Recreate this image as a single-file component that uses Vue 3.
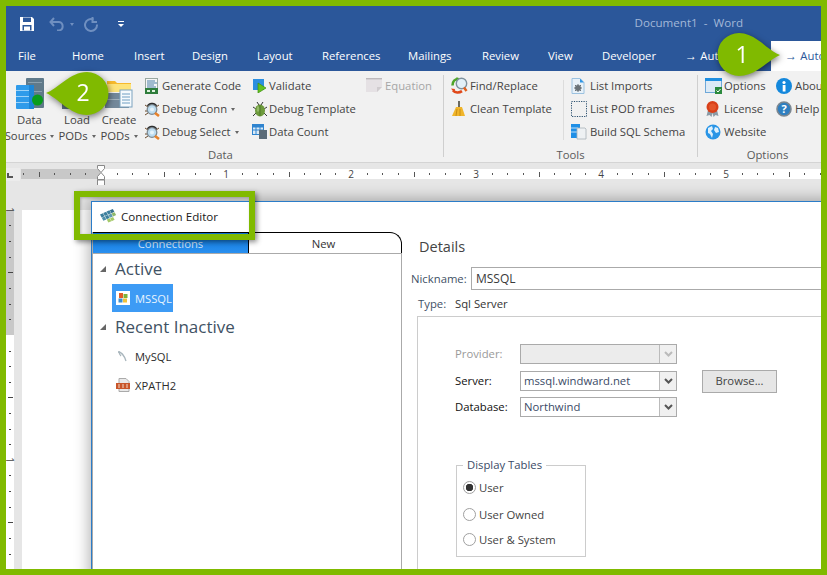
<script setup>
const tabs = [
  { label: 'File', width: 54 },
  { label: 'Home', width: 62 },
  { label: 'Insert', width: 58 },
  { label: 'Design', width: 65 },
  { label: 'Layout', width: 65 },
  { label: 'References', width: 86 },
  { label: 'Mailings', width: 74 },
  { label: 'Review', width: 66 },
  { label: 'View', width: 54 },
  { label: 'Developer', width: 83 },
  { label: 'Auto', width: 86, arrow: true }
]
const rulerTicks = []
for (let i = -5; i <= 46; i++) {
  const left = 80 + i * 15.625
  const kind = i === 0 ? 'none' : i % 8 === 0 ? 'num' : i % 4 === 0 ? 'long' : 'dot'
  rulerTicks.push({ i, left, kind, label: i / 8 })
}
const vTicks = [225, 241, 257, 272, 288, 304, 319, 351, 366, 382, 397, 413, 429, 444, 475, 491, 507, 522, 538, 554].map(y => ({
  top: y - 210,
  long: y === 272 || y === 522 || y === 397
}))
const vNums = [0, 250]
</script>

<template>
  <div class="frame">
    <header class="titlebar">
      <div class="qat">
        <svg class="qi-save" width="16" height="16" viewBox="0 0 16 16"><path d="M1 1h12l2 2v12H1z" fill="#fff"/><rect x="4" y="1.5" width="8" height="4.5" fill="#2b579a"/><rect x="3.5" y="9" width="9" height="5.5" fill="#2b579a"/><rect x="5" y="10.5" width="6" height="4" fill="#fff"/></svg>
        <svg class="qi-undo" width="17" height="14" viewBox="0 0 17 14" fill="none" stroke="#6f8fc0" stroke-width="2"><path d="M5 1 1.5 5 5 9"/><path d="M2 5h8a4.3 4.3 0 0 1 0 8.5H8"/></svg>
        <span class="qi-caret dim"></span>
        <svg class="qi-redo" width="15" height="15" viewBox="0 0 15 15" fill="none" stroke="#6f8fc0" stroke-width="2"><path d="M9.5 2.5A6 6 0 1 0 13 7.5"/><path d="M8.5 0v5h4.5"/></svg>
        <span class="qi-more"></span>
      </div>
      <div class="doc-title">Document1&nbsp; - &nbsp;Word</div>
    </header>

    <nav class="tabs">
      <div v-for="t in tabs" :key="t.label" class="tab" :style="{ width: t.width + 'px' }"><span v-if="t.arrow" class="arrow">→ </span>{{ t.label }}</div>
      <div class="tab-active"><span class="arrow">→ </span>Auto</div>
    </nav>

    <section class="ribbon">
      <div class="group group-data">
        <div class="group-body">
          <div class="big big-1">
            <svg width="30" height="33" viewBox="0 0 30 33"><rect x="11" y="0" width="18" height="30" rx="1" fill="#607a8a"/><rect x="13" y="4" width="14" height="1" fill="#8aa0ae"/><rect x="13" y="13" width="14" height="1" fill="#8aa0ae"/><rect x="1" y="7" width="18" height="24" rx="1" fill="#2f9bea"/><rect x="1" y="12" width="13" height="1" fill="#9ed3f8"/><rect x="1" y="18" width="13" height="1" fill="#9ed3f8"/><rect x="1" y="24" width="13" height="1" fill="#9ed3f8"/><rect x="14" y="7" width="5" height="24" fill="#1d86d6"/><circle cx="22.5" cy="22" r="5.5" fill="#0a9c1c"/></svg>
            <span>Data</span>
            <span>Sources<i class="caret"></i></span>
          </div>
          <div class="big big-2">
            <svg width="34" height="33" viewBox="0 0 34 33"><rect x="2" y="22" width="30" height="9" fill="#5d7280"/><rect x="14" y="2" width="20" height="26" fill="#f4cf50"/></svg>
            <span>Load</span>
            <span>PODs<i class="caret"></i></span>
          </div>
          <div class="big big-3">
            <svg width="28" height="33" viewBox="0 0 28 33"><path d="M2 3h8l2 2h14v8H2z" fill="#f6b92d"/><rect x="2" y="6" width="24" height="8" fill="#fde37a"/><rect x="0" y="15" width="24" height="15" fill="#73889a"/><rect x="0" y="21" width="24" height="1" fill="#a3b2bd"/><rect x="15" y="12" width="12" height="17" fill="#f5fafd" stroke="#7da3bf"/><path d="M17 16h8M17 19h8M17 22h8M17 25h8" stroke="#6f9ec2"/></svg>
            <span>Create</span>
            <span>PODs<i class="caret"></i></span>
          </div>
          <div class="col col-a">
            <div class="cmd">
              <svg width="14" height="16" viewBox="0 0 14 16"><rect x=".5" y=".5" width="12" height="15" fill="#f6f6f6" stroke="#9aa8a0"/><path d="M2 3h8M2 5h10M2 7h7M2 9h9" stroke="#4a7fa6"/><rect y="10" width="13" height="6" fill="#2f7d3c"/><rect x="2" y="12" width="3" height="2" fill="#dff2df"/><rect x="7" y="12" width="3" height="2" fill="#dff2df"/></svg>
              <span>Generate Code</span>
            </div>
            <div class="cmd">
              <svg width="15" height="16" viewBox="0 0 15 16"><path d="M2 5.500C2 .5 12 .5 12 5.500z" fill="#2e2e2e"/><path d="M0 4l3 2M14 4l-3 2M0 10h2M0 14l3-2" stroke="#6b4a2a"/><circle cx="7" cy="8.500" r="4.800" fill="#bcdcf0" stroke="#7d8a92" stroke-width="1.300"/><circle cx="7" cy="8.500" r="2" fill="#e6f3fa"/><path d="M10 12l4 3" stroke="#e8822a" stroke-width="2.600"/></svg>
              <span>Debug Conn<i class="caret"></i></span>
            </div>
            <div class="cmd">
              <svg width="15" height="16" viewBox="0 0 15 16"><path d="M2 5.500C2 .5 12 .5 12 5.500z" fill="#2e2e2e"/><path d="M0 4l3 2M14 4l-3 2M0 10h2M0 14l3-2" stroke="#6b4a2a"/><circle cx="7" cy="8.500" r="4.800" fill="#bcdcf0" stroke="#7d8a92" stroke-width="1.300"/><circle cx="7" cy="8.500" r="2" fill="#e6f3fa"/><path d="M10 12l4 3" stroke="#e8822a" stroke-width="2.600"/></svg>
              <span>Debug Select<i class="caret"></i></span>
            </div>
          </div>
          <div class="col col-b">
            <div class="cmd">
              <svg width="15" height="15" viewBox="0 0 15 15"><rect x="1" y="1" width="11" height="11" fill="#2c8fe0"/><path d="M6 5l8 5-8 5z" fill="#63c21f" stroke="#3d8f10" stroke-width=".7"/></svg>
              <span>Validate</span>
            </div>
            <div class="cmd">
              <svg width="16" height="16" viewBox="0 0 16 16"><path d="M5 1l2 3M11 1 9 4M1 6l3 2M15 6l-3 2M1 15l3-3M15 15l-3-3" stroke="#333" fill="none"/><ellipse cx="8" cy="9.5" rx="5" ry="6" fill="#6d9a3c"/><path d="M8 4v11" stroke="#3f6a20" stroke-width=".7"/><ellipse cx="6" cy="8" rx="1.3" ry="3" fill="#93ba66"/></svg>
              <span>Debug Template</span>
            </div>
            <div class="cmd">
              <svg width="15" height="15" viewBox="0 0 15 15"><rect x=".5" y=".5" width="11" height="10" fill="#dbeaf6" stroke="#2f84cf"/><rect x="1" y="1" width="10" height="2.5" fill="#2f84cf"/><path d="M4 3v8M8 3v8M1 6h10" stroke="#2f84cf"/><rect x="7" y="6" width="8" height="9" fill="#5b6c78"/></svg>
              <span>Data Count</span>
            </div>
          </div>
          <div class="col col-c">
            <div class="cmd disabled">
              <svg width="17" height="15" viewBox="0 0 17 15"><path d="M0 1h16v8l-5 5H0z" fill="#e5e1e4"/><rect y="0" width="16" height="1.4" fill="#bdb9bc"/><path d="M11 14l5-5h-5z" fill="#cfcbce"/></svg>
              <span>Equation</span>
            </div>
          </div>
        </div>
        <div class="group-label label-data">Data</div>
      </div>
      <div class="sep"></div>

      <div class="group group-tools">
        <div class="group-body">
          <div class="col col-d">
            <div class="cmd">
              <svg width="17" height="17" viewBox="0 0 17 17"><path d="M1.500 8.500C1.500 4.500 4 2 7.500 2" fill="none" stroke="#4fa52a" stroke-width="2.600"/><path d="M5.500 0l3.500 2-3.500 2.800z" fill="#4fa52a"/><path d="M2 13.500c2 2.500 6 2.700 9 .7" fill="none" stroke="#e0481a" stroke-width="2.600"/><path d="M0 11.500l4 .5-.8 3.500z" fill="#e0481a"/><circle cx="10.500" cy="6.500" r="5.200" fill="#e2f0f8" stroke="#7f929e" stroke-width="1.400"/><path d="M13 10.500l2.500 3.500" stroke="#e0601e" stroke-width="2.400"/></svg>
              <span>Find/Replace</span>
            </div>
            <div class="cmd">
              <svg width="15" height="16" viewBox="0 0 15 16"><rect x="7" y="0" width="2" height="7" fill="#6a6a60"/><path d="M5 6h6l3 9H1z" fill="#f0b52a"/><path d="M5 15l1-7M9 15V8" stroke="#c98d14" fill="none"/></svg>
              <span>Clean Template</span>
            </div>
          </div>
          <div class="light-sep"></div>
          <div class="col col-e">
            <div class="cmd">
              <svg width="14" height="16" viewBox="0 0 14 16"><path d="M1 .5h8l4 4v11H1z" fill="#e8f1f8" stroke="#9cc2e0"/><path d="M9 .5v4h4z" fill="#2f95e4"/><circle cx="7" cy="10" r="3" fill="#6b7378"/><circle cx="7" cy="10" r="1" fill="#e8f1f8"/><path d="M7 6v8M3 10h8M4 7l6 6M10 7l-6 6" stroke="#6b7378"/></svg>
              <span>List Imports</span>
            </div>
            <div class="cmd">
              <svg width="16" height="16" viewBox="0 0 16 16"><rect x=".5" y=".5" width="15" height="15" fill="none" stroke="#2a4f6e" stroke-dasharray="1.2 1.2"/></svg>
              <span>List POD frames</span>
            </div>
            <div class="cmd">
              <svg width="16" height="16" viewBox="0 0 16 16"><rect x="0" y="0" width="9" height="14" fill="#1f8fe6"/><path d="M0 4h7M0 8h7" stroke="#bfe0fa"/><path d="M6 4h8l1 1v10H6z" fill="#eef1f3" stroke="#a8b2b8" stroke-width=".8"/></svg>
              <span>Build SQL Schema</span>
            </div>
          </div>
        </div>
        <div class="group-label">Tools</div>
      </div>
      <div class="sep"></div>

      <div class="group group-options">
        <div class="group-body">
          <div class="col col-f">
            <div class="cmd">
              <svg width="17" height="16" viewBox="0 0 17 16"><rect x=".5" y=".5" width="16" height="14" fill="#dceaf6" stroke="#6fa8d8"/><rect x="0" y="0" width="17" height="3" fill="#1f8fe0"/><rect x="10" y="9" width="7" height="7" fill="#2c8a3e"/><path d="M11.5 12.5l1.5 1.5 2.5-3" stroke="#fff" fill="none"/></svg>
              <span>Options</span>
            </div>
            <div class="cmd">
              <svg width="15" height="16" viewBox="0 0 15 16"><path d="M3 9 1.5 15l3-1 2 2 1-4 1 4 2-2 3 1L12 9z" fill="#8a9aa5"/><circle cx="7.5" cy="6" r="6" fill="#d8401a"/><circle cx="7.5" cy="6" r="3.5" fill="#e4552a"/></svg>
              <span>License</span>
            </div>
            <div class="cmd">
              <svg width="16" height="16" viewBox="0 0 16 16"><circle cx="8" cy="8" r="7.5" fill="#2a95e6"/><path d="M3 4l4-2 1 3-2 2 2 3-1 4-2-4-2-1zM10 3l3 1 1 4-3 1-2-3z" fill="#dff0fb"/></svg>
              <span>Website</span>
            </div>
          </div>
          <div class="col col-g">
            <div class="cmd">
              <svg width="16" height="16" viewBox="0 0 16 16"><circle cx="8" cy="8" r="8" fill="#1488dc"/><rect x="6.7" y="7" width="2.8" height="6.5" fill="#fff"/><circle cx="8" cy="4.5" r="1.6" fill="#fff"/></svg>
              <span>About</span>
            </div>
            <div class="cmd">
              <svg width="16" height="16" viewBox="0 0 16 16"><circle cx="8" cy="8" r="7" fill="#2f7fc0" stroke="#7c8790" stroke-width="1.6"/><text x="8" y="12" text-anchor="middle" class="q-glyph">?</text></svg>
              <span>Help</span>
            </div>
          </div>
        </div>
        <div class="group-label label-options">Options</div>
      </div>
    </section>

    <section class="h-ruler">
      <div class="corner"><i class="corner-l"></i></div>
      <div class="strip">
        <div class="strip-grey"></div>
        <template v-for="t in rulerTicks" :key="t.i">
          <span v-if="t.kind === 'num'" class="r-num" :style="{ left: t.left + 'px' }">{{ t.label }}</span>
          <i v-else-if="t.kind !== 'none'" :class="t.kind === 'long' ? 'r-long' : 'r-dot'" :style="{ left: t.left + 'px' }"></i>
        </template>
      </div>
      <svg class="indent" width="10" height="22" viewBox="0 0 10 22"><path d="M1.5.5h7v3L5 7.5 1.5 3.5z" fill="#fff" stroke="#888"/><path d="M5 7.5l3.500 4v3h-7v-3z" fill="#fff" stroke="#888"/><rect x="1.500" y="15" width="7" height="6" fill="#fff" stroke="#888"/></svg>
    </section>

    <section class="doc">
      <aside class="v-ruler">
        <div class="v-grey"></div>
        <i v-for="t in vTicks" :key="t.top" :class="t.long ? 'v-long' : 'v-dot'" :style="{ top: t.top + 'px' }"></i>
        <span v-for="n in vNums" :key="n" class="v-num" :style="{ top: n + 'px' }">1</span>
      </aside>
      <div class="gutter"></div>
      <div class="page"></div>

      <div class="dialog">
        <div class="dlg-title">
          <svg width="17" height="16" viewBox="0 0 17 16"><g transform="matrix(.82 -.36 .44 .82 0 6.500)"><rect x="0" y="0" width="3.600" height="3.600" fill="#3c7f9c"/><rect x="4" y="0" width="3.600" height="3.600" fill="#3c7f9c"/><rect x="8" y="0" width="3.600" height="3.600" fill="#3c7f9c"/><rect x="12" y="0" width="3.600" height="3.600" fill="#356f8d"/><rect x="0" y="4" width="3.600" height="3.600" fill="#4f8fa8"/><rect x="4" y="4" width="3.600" height="3.600" fill="#3c7f9c"/><rect x="8" y="4" width="3.600" height="3.600" fill="#5d9ab0"/><rect x="12" y="4" width="3.600" height="3.600" fill="#8fb86a"/><rect x="4" y="8" width="3.600" height="3.600" fill="#a5c96a"/><rect x="8" y="8" width="3.600" height="3.600" fill="#a5c96a"/></g></svg>
          <span>Connection Editor</span>
        </div>
        <div class="dlg-body">
          <div class="left-pane">
            <div class="ltabs">
              <div class="ltab on">Connections</div>
              <div class="ltab off">New</div>
            </div>
            <div class="tree">
              <div class="t-head"><i class="t-arrow"></i>Active</div>
              <div class="t-item selected">
                <span class="t-tile"><svg width="12" height="12" viewBox="0 0 12 12"><rect x="2" y="1" width="4" height="5" fill="#e05a28"/><rect x="6.500" y="2" width="4" height="4" fill="#7fb23a"/><rect x="1.500" y="6.500" width="4" height="4" fill="#3a8fd0"/><rect x="6" y="6.500" width="4" height="4" fill="#efc13a"/></svg></span>
                <span>MSSQL</span>
              </div>
              <div class="t-head"><i class="t-arrow"></i>Recent Inactive</div>
              <div class="t-item">
                <svg class="t-ico" width="14" height="14" viewBox="0 0 14 14" fill="none" stroke="#a9b6bd" stroke-width="1.300"><path d="M2 3c3 0 6 3 8 9"/><path d="M3 2c0 3 1 4 2 5"/></svg>
                <span>MySQL</span>
              </div>
              <div class="t-item">
                <svg class="t-ico" width="14" height="14" viewBox="0 0 14 14"><path d="M3 .5h7l3 3V13.500H3z" fill="#e9e9e9" stroke="#aaa"/><rect x="0" y="5" width="14" height="6" fill="#c8562a"/><path d="M2 7h2M6 7h2M10 7h2M2 9h2M6 9h2M10 9h2" stroke="#f3d9c9"/></svg>
                <span>XPATH2</span>
              </div>
            </div>
          </div>
          <div class="right-pane">
            <h2 class="details">Details</h2>
            <div class="nick">
              <label>Nickname:</label>
              <div class="nick-input">MSSQL</div>
            </div>
            <div class="type-row"><span class="type-l">Type:</span><span>Sql Server</span></div>
            <div class="panel">
              <div class="f-row f-provider">
                <label class="muted">Provider:</label>
                <div class="combo disabled-combo"><span></span><b><svg width="9" height="6" viewBox="0 0 9 6" fill="none" stroke="#bbb" stroke-width="2"><path d="M1 1l3.500 3.500L8 1"/></svg></b></div>
              </div>
              <div class="f-row f-server">
                <label>Server:</label>
                <div class="combo"><span>mssql.windward.net</span><b><svg width="9" height="6" viewBox="0 0 9 6" fill="none" stroke="#555" stroke-width="2"><path d="M1 1l3.500 3.500L8 1"/></svg></b></div>
                <button class="browse">Browse...</button>
              </div>
              <div class="f-row">
                <label>Database:</label>
                <div class="combo"><span>Northwind</span><b><svg width="9" height="6" viewBox="0 0 9 6" fill="none" stroke="#555" stroke-width="2"><path d="M1 1l3.500 3.500L8 1"/></svg></b></div>
              </div>
              <fieldset class="tables">
                <legend>Display Tables</legend>
                <div class="radio r1"><i class="dot checked"></i>User</div>
                <div class="radio r2"><i class="dot"></i>User Owned</div>
                <div class="radio r3"><i class="dot"></i>User &amp; System</div>
              </fieldset>
            </div>
          </div>
        </div>
      </div>
      <div class="hl-box"></div>
    </section>

    <svg class="callout c1" width="72" height="56" viewBox="0 0 72 56"><path d="M70 29C58 25 46 7 29 7A21.500 21.500 0 0 0 29 50C46 50 58 34 70 29Z" fill="#80ba00"/><text x="32" y="37" text-anchor="middle">1</text></svg>
    <svg class="callout c2" width="72" height="56" viewBox="0 0 72 56"><path d="M6 27C18 23 30 6 47 6A21.500 21.500 0 0 1 47 49C30 49 18 32 6 27Z" fill="#80ba00"/><text x="43" y="35" text-anchor="middle">2</text></svg>
  </div>
</template>

<style scoped>
.frame {
  position: relative;
  width: 827px;
  height: 575px;
  box-sizing: border-box;
  border: 6px solid #80ba00;
  overflow: hidden;
  background: #e6e6e6;
  font-family: "Open Sans", "Noto Sans", sans-serif;
  font-size: 11.3px;
  color: #444;
  display: flex;
  flex-direction: column;
}
.titlebar {
  height: 35px;
  flex: none;
  background: #2b579a;
  display: flex;
  justify-content: space-between;
}
.qat { display: flex; align-items: center; padding-left: 13px; padding-top: 1px; }
.qi-undo { margin-left: 14px; }
.qi-caret { width: 0; height: 0; border: 2.5px solid transparent; border-top: 3px solid #6f8fc0; border-bottom: 0; margin-left: 4px; }
.qi-redo { margin-left: 10px; }
.qi-more { width: 6px; height: 6px; margin-left: 19px; border-top: 1px solid #fff; position: relative; }
.qi-more::after { content: ""; position: absolute; left: 0; top: 2px; border: 3px solid transparent; border-top: 3px solid #fff; border-bottom: 0; }
.doc-title { color: #a3b8d8; font-size: 11.6px; padding: 9px 78px 0 0; line-height: 16px; }
.tabs {
  height: 30px;
  flex: none;
  background: #2b579a;
  padding-left: 12px;
  display: flex;
  overflow: hidden;
}
.tab { flex: none; color: #fff; font-size: 11.3px; line-height: 30px; white-space: nowrap; }
.arrow { font-family: "Liberation Sans", sans-serif; font-size: 12px; }
.tab-active { flex: none; width: 60px; padding-left: 14px; background: #fff; color: #2b579a; font-size: 11.3px; line-height: 30px; white-space: nowrap; }
.ribbon {
  height: 92px;
  flex: none;
  box-sizing: border-box;
  background: #f1f1f1;
  border-bottom: 1px solid #d4d4d4;
  display: flex;
}
.group { display: flex; flex-direction: column; flex: none; height: 91px; }
.group-data { width: 437px; }
.group-tools { width: 253px; }
.group-options { width: 130px; }
.group-body { display: flex; height: 74px; padding-top: 3px; flex: none; }
.group-label { text-align: center; line-height: 14px; color: #5a5a5a; }
.label-data { padding-right: 8px; }
.label-options { padding-left: 9px; }
.sep { width: 1px; flex: none; background: #cfcfcf; margin: 4px 0 5px; }
.light-sep { width: 1px; background: #dcdcdc; margin: 6px 7px 8px 0; flex: none; }
.big { display: flex; flex-direction: column; align-items: center; flex: none; line-height: 16px; white-space: nowrap; }
.big svg { margin: 4px 0 1px; flex: none; height: 33px; }
.big span { display: block; }
.big-1 { width: 47px; }
.big-2 { width: 48px; }
.big-3 { width: 36px; }
.col { display: flex; flex-direction: column; flex: none; --slot: 19px; }
.col-a { width: 107px; margin-left: 8px; --slot: 17px; }
.col-b { width: 114px; --slot: 17px; }
.col-c { width: 76px; }
.col-d { width: 112px; margin-left: 7px; }
.col-e { width: 120px; }
.col-f { width: 71px; margin-left: 7px; }
.col-g { width: 52px; }
.cmd { height: 23px; display: grid; grid-template-columns: var(--slot) auto; align-items: center; justify-content: start; white-space: nowrap; }
.cmd.disabled { color: #a6a6a6; }
.q-glyph { font: 700 11px "Open Sans", sans-serif; fill: #fff; }
.caret { display: inline-block; width: 0; height: 0; border: 2.5px solid transparent; border-top: 3px solid #666; border-bottom: 0; margin-left: 4px; vertical-align: 2px; }
.h-ruler { position: relative; height: 22px; flex: none; background: #e6e6e6; }
.corner { position: absolute; left: 0; top: 5px; width: 14px; height: 13px; background: #ececec; }
.corner-l { position: absolute; left: 1px; top: 5px; width: 4px; height: 3px; border-left: 2px solid #555; border-bottom: 2px solid #555; }
.strip { position: absolute; left: 15px; right: 0; top: 6px; height: 10px; background: #fff; }
.strip-grey { position: absolute; left: 0; top: 0; bottom: 0; width: 79px; background: #c8c8c8; }
.r-num { position: absolute; top: 0; width: 12px; margin-left: -6px; text-align: center; font-size: 10px; line-height: 10px; color: #444; }
.r-dot { position: absolute; top: 4px; width: 1px; height: 2px; background: #555; }
.r-long { position: absolute; top: 3px; width: 1px; height: 5px; background: #555; }
.indent { position: absolute; left: 90px; top: 2px; }
.doc { position: relative; flex: 1; display: flex; min-height: 0; background: #e6e6e6; }
.v-ruler { position: relative; width: 8px; flex: none; background: #fff; margin-top: 25px; }
.v-grey { position: absolute; left: 0; right: 0; top: 0; height: 125px; background: #c8c8c8; }
.v-dot { position: absolute; left: 3px; width: 2px; height: 1px; background: #444; }
.v-long { position: absolute; left: 2px; width: 5px; height: 1px; background: #444; }
.v-num { position: absolute; left: 0; width: 8px; height: 8px; margin-top: -4px; font-size: 10px; line-height: 8px; text-align: center; color: #444; transform: rotate(90deg); }
.gutter { width: 8px; flex: none; }
.page { flex: 1; background: #fff; margin-top: 25px; }
.dialog {
  position: absolute;
  left: 85px;
  top: 16px;
  width: 760px;
  height: 400px;
  box-sizing: border-box;
  background: #fff;
  border-top: 1px solid #2b7cc8;
  border-left: 1px solid #2b7cc8;
  box-shadow: 0 0 14px 2px rgba(0, 0, 0, 0.3);
  display: flex;
  flex-direction: column;
}
.dlg-title { height: 30px; flex: none; display: flex; align-items: center; gap: 4px; padding-left: 8px; padding-bottom: 2px; box-sizing: border-box; color: #1a1a1a; font-size: 11.6px; }
.dlg-body { flex: 1; display: flex; min-height: 0; border-left: 1px solid #aaa; }
.left-pane { width: 309px; flex: none; display: flex; flex-direction: column; }
.ltabs { display: flex; height: 22px; flex: none; border-bottom: 1px solid #aaa; box-sizing: border-box; }
.ltab { text-align: center; font-size: 11.3px; line-height: 21px; box-sizing: border-box; border-top: 1px solid #000; }
.ltab.on { width: 155px; background: linear-gradient(#0d76d8, #2990f0); color: #cfe3f6; }
.ltab.off { width: 154px; padding-right: 3px; border-left: 1px solid #000; border-right: 1px solid #000; border-top-right-radius: 12px; color: #333; }
.tree { flex: 1; border-right: 1px solid #aaa; padding-top: 1px; display: flex; flex-direction: column; gap: 1px; align-items: flex-start; }
.t-head { height: 28px; line-height: 28px; font-size: 17px; color: #3f5264; padding-left: 22px; position: relative; white-space: nowrap; }
.t-arrow { position: absolute; left: 7px; top: 11px; width: 0; height: 0; border-bottom: 6px solid #666; border-left: 6px solid transparent; }
.t-item { height: 28px; display: flex; align-items: center; gap: 5px; margin-left: 19px; padding-left: 4px; font-size: 11.2px; color: #2c2c2c; white-space: nowrap; }
.t-item.selected { width: 57px; background: #3d9bf5; color: #e8f3fe; }
.t-tile { width: 14px; height: 14px; background: #fff; display: flex; align-items: center; justify-content: center; flex: none; }
.t-ico { flex: none; }
.right-pane { flex: 1; min-width: 0; padding-left: 9px; }
.details { margin: 0 0 0 8px; font-weight: 400; font-size: 14.5px; line-height: 30px; color: #444; }
.nick { display: flex; align-items: center; margin-top: 5px; height: 23px; }
.nick label { width: 60px; flex: none; color: #3f5166; font-size: 11.3px; }
.nick-input { flex: 1; height: 23px; box-sizing: border-box; border: 1px solid #aaa; padding-left: 4px; line-height: 21px; font-size: 12px; color: #3a3a3a; }
.type-row { margin: 5px 0 0 7px; height: 18px; line-height: 18px; display: flex; color: #333; }
.type-l { width: 37px; color: #3f5166; }
.panel { margin: 3px 0 0 6px; height: 300px; border: 1px solid #ccc; padding: 27px 0 0 37px; }
.f-row { display: flex; align-items: center; height: 20px; margin-bottom: 6px; line-height: 18px; }
.f-provider { margin-bottom: 7px; }
.f-row label { width: 65px; flex: none; color: #111; }
.f-row label.muted { color: #9a9a9a; }
.combo { width: 157px; height: 20px; box-sizing: border-box; border: 1px solid #aaa; display: flex; line-height: 18px; color: #3a4a66; flex: none; font-size: 11.3px; }
.combo span { flex: 1; padding-left: 3px; }
.combo b { width: 16px; border-left: 1px solid #bbb; background: #f0f0f0; display: flex; align-items: center; justify-content: center; }
.disabled-combo { background: #ececec; }
.browse { margin-left: 25px; width: 75px; height: 23px; box-sizing: border-box; flex: none; border: 1px solid #aaa; background: #e6e6e6; font: inherit; color: #444; padding: 0; }
.tables { margin: 40px 0 0 1px; padding: 0; width: 130px; height: 100px; box-sizing: border-box; border: 1px solid #ccc; display: block; }
.tables legend { margin-left: 6px; padding: 0 4px; line-height: 16px; color: #3a4a66; }
.radio { display: flex; align-items: center; gap: 3px; height: 16px; margin-left: 6px; color: #444; position: relative; }
.r1 { margin-top: 6px; }
.r2 { margin-top: 11px; }
.r3 { margin-top: 9px; }
.dot { width: 13px; height: 13px; box-sizing: border-box; border: 1px solid #a0a0a0; border-radius: 50%; background: #fff; display: block; flex: none; }
.dot.checked { background: radial-gradient(circle, #333 0 3.5px, #fff 4px); }
.hl-box {
  position: absolute;
  left: 68px;
  top: 6px;
  width: 181px;
  height: 49px;
  box-sizing: border-box;
  border: 6px solid #80ba00;
  box-shadow: 2px 2px 5px rgba(0, 0, 0, 0.45), inset 1px 1px 3px rgba(0, 0, 0, 0.25);
}
.callout { position: absolute; filter: drop-shadow(1px 2px 3px rgba(0, 0, 0, 0.5)); }
.callout text { fill: #fff; font: 400 23px "Open Sans", sans-serif; }
.c1 { left: 704px; top: 20px; }
.c2 { left: 34px; top: 60px; }
</style>
